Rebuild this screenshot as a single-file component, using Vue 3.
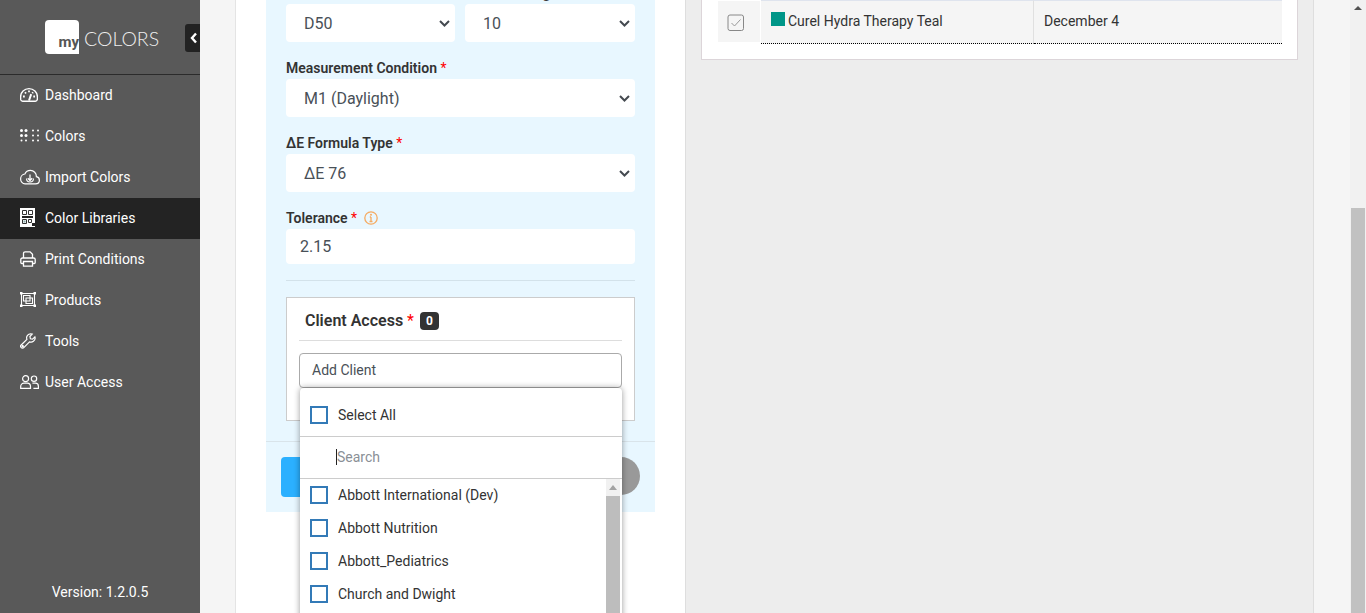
<template>
  <div class="shell">
    <aside class="sidebar">
      <div class="brand">
        <div class="logo-box"><span class="logo-my">my</span></div>
        <span class="logo-word">COLORS</span>
        <button class="collapse">
          <svg width="8" height="12" viewBox="0 0 8 12"><path d="M6 1.500 2 6l4 4.500" fill="none" stroke="#fff" stroke-width="2.400"/></svg>
        </button>
      </div>
      <nav class="nav">
        <a v-for="item in navItems" :key="item.label" class="nav-item" :class="{ active: item.active }">
          <span class="nav-icon">
            <svg v-if="item.icon === 'dashboard'" width="18" height="16" viewBox="0 0 18 16" fill="none" stroke="#fff" stroke-width="1.400">
              <path d="M2.600 14.200h12.800c1 0 1.600-.5 1.800-1.300.3-1 .2-2 .2-2.900C17.400 5.400 13.700 1.600 9 1.600S.6 5.400.6 10c0 .9 0 1.900.2 2.900.2.800.8 1.300 1.800 1.300z"/>
              <path d="M9 13.500 11.200 7.200" stroke-width="2"/>
              <path d="M9 3.500v1.800M5 5.200l1 1.400M13 5.200l-.7 1M3 9.500h1.800M13.300 9.500H15" stroke-width="1.800"/>
            </svg>
            <svg v-else-if="item.icon === 'colors'" width="20" height="13" viewBox="0 0 20 13" fill="#fff">
              <circle v-for="d in colorDots" :key="d.x + '-' + d.y" :cx="d.x" :cy="d.y" :r="d.r" />
            </svg>
            <svg v-else-if="item.icon === 'import'" width="20" height="16" viewBox="0 0 20 16" fill="none" stroke="#fff" stroke-width="1.200">
              <path d="M5 14.800h10.500c2.200 0 3.900-1.600 3.900-3.600 0-1.800-1.300-3.200-3-3.500.1-3.500-2.600-6.300-6-6.300-2.500 0-4.600 1.400-5.500 3.600C2.600 5.200.6 7.300.6 9.900c0 2.700 2 4.900 4.400 4.900z"/>
              <path d="M6.500 9.500a3.500 3.500 0 0 0 7 0" stroke-width="1.100"/>
              <path d="M10 5.500v6M7.800 9.200l2.200 2.300 2.200-2.300" stroke-width="1.300"/>
            </svg>
            <svg v-else-if="item.icon === 'libraries'" width="15" height="19" viewBox="0 0 15 19">
              <rect width="15" height="19" fill="#fff"/>
              <path d="M2.500 2.500h4v4h-4zM8.500 2.500h4v4h-4zM2.500 11.500h4v4h-4zM8.500 11.500h3v3h-3z" fill="none" stroke="#333" stroke-width="1"/>
              <rect x="2" y="8" width="11" height="2" fill="#222"/>
              <rect x="3.500" y="12.500" width="2" height="2" fill="#8aa"/>
              <rect x="12" y="15" width="3" height="3" fill="#222"/>
            </svg>
            <svg v-else-if="item.icon === 'print'" width="16" height="16" viewBox="0 0 16 16" fill="none" stroke="#fff" stroke-width="1.300">
              <path d="M3.500 7V2.400c0-.9.700-1.600 1.600-1.600h5l2.400 2.400V7"/>
              <path d="M3.500 12.500H1.800c-.6 0-1-.4-1-1V8.600c0-.9.700-1.600 1.600-1.600h11.200c.9 0 1.600.7 1.600 1.600v2.900c0 .6-.4 1-1 1h-1.700"/>
              <path d="M3.500 10.500h9v4.700h-9z"/>
            </svg>
            <svg v-else-if="item.icon === 'products'" width="16" height="15" viewBox="0 0 16 15" fill="none" stroke="#fff" stroke-width="1.100">
              <path d="M1.500 1.500h13v12h-13z"/>
              <path d="M3.500 3.500h6.500v5.500H3.500zM6 6h6.500v5.500H6z"/>
              <g fill="#fff" stroke="none">
                <rect x="0" y="0" width="2.500" height="2.500"/><rect x="13.500" y="0" width="2.500" height="2.500"/>
                <rect x="0" y="12.500" width="2.500" height="2.500"/><rect x="13.500" y="12.500" width="2.500" height="2.500"/>
              </g>
            </svg>
            <svg v-else-if="item.icon === 'tools'" width="16" height="16" viewBox="0 0 16 16" fill="none" stroke="#fff" stroke-width="1.200">
              <path d="M14.900 3.900 12.600 6.200l-2.200-.4-.5-2.300L12.200 1.100c-1.700-.6-3.600-.1-4.700 1.300-.9 1.100-1.100 2.600-.6 3.900L1.200 12c-.7.700-.7 1.900 0 2.600s1.900.7 2.600 0l5.700-5.700c1.300.5 2.800.3 3.900-.6 1.400-1.100 2-3 1.500-4.400z"/>
              <circle cx="2.700" cy="13.200" r=".6" fill="#fff"/>
            </svg>
            <svg v-else width="19" height="14" viewBox="0 0 19 14" fill="none" stroke="#fff" stroke-width="1.200">
              <circle cx="5.600" cy="3.700" r="3"/>
              <circle cx="14" cy="3.700" r="2.700"/>
              <path d="M.7 13.300v-1.700c0-2 1.500-3.400 3.300-3.400h3.200c1.800 0 3.300 1.400 3.300 3.400v1.700z"/>
              <path d="M12.400 8.200h3c1.700 0 3 1.300 3 3v2.100h-5"/>
            </svg>
          </span>
          <span>{{ item.label }}</span>
        </a>
      </nav>
      <div class="version">Version: 1.2.0.5</div>
    </aside>

    <div class="gutter"></div>

    <section class="form-panel">
      <div class="form-box">
        <div class="form-body">
          <div class="row-two">
            <div class="field">
              <label class="field-label">Illuminant <em>*</em></label>
              <div class="select">D50<svg class="chev" width="11" height="7" viewBox="0 0 11 7"><path d="M1 1l4.500 4.500L10 1" fill="none" stroke="#454a50" stroke-width="2"/></svg></div>
            </div>
            <div class="field">
              <label class="field-label">Observer Angle <em>*</em></label>
              <div class="select">10<svg class="chev" width="11" height="7" viewBox="0 0 11 7"><path d="M1 1l4.500 4.500L10 1" fill="none" stroke="#454a50" stroke-width="2"/></svg></div>
            </div>
          </div>
          <div class="field">
            <label class="field-label">Measurement Condition <em>*</em></label>
            <div class="select">M1 (Daylight)<svg class="chev" width="11" height="7" viewBox="0 0 11 7"><path d="M1 1l4.500 4.500L10 1" fill="none" stroke="#454a50" stroke-width="2"/></svg></div>
          </div>
          <div class="field">
            <label class="field-label">ΔE Formula Type <em>*</em></label>
            <div class="select">ΔE 76<svg class="chev" width="11" height="7" viewBox="0 0 11 7"><path d="M1 1l4.500 4.500L10 1" fill="none" stroke="#454a50" stroke-width="2"/></svg></div>
          </div>
          <div class="field">
            <label class="field-label">Tolerance <em>*</em>
              <svg class="info" width="14" height="14" viewBox="0 0 14 14" fill="none" stroke="#f5ab62" stroke-width="1.300">
                <circle cx="7" cy="7" r="6.200"/>
                <path d="M7 6v4.500M5.500 10.500h3M5.800 6H7" />
                <circle cx="7" cy="3.800" r="1" fill="#f5ab62" stroke="none"/>
              </svg>
            </label>
            <div class="input">2.15</div>
          </div>
          <div class="rule"></div>
          <div class="client-box">
            <div class="client-head">
              <span class="client-title">Client Access <em>*</em></span>
              <span class="badge">0</span>
            </div>
            <div class="add-client">Add Client</div>
            <div class="dropdown">
              <div class="select-all">
                <span class="check"></span>
                <span>Select All</span>
              </div>
              <div class="search"><span class="caret"></span><span class="placeholder">Search</span></div>
              <div class="client-list">
                <div class="client-items">
                  <div v-for="c in clients" :key="c" class="client-item">
                    <span class="check"></span>
                    <span>{{ c }}</span>
                  </div>
                </div>
                <div class="list-scroll">
                  <span class="list-arrow"></span>
                  <span class="list-thumb"></span>
                </div>
              </div>
            </div>
          </div>
        </div>
        <div class="form-foot">
          <button class="btn-save"></button>
          <button class="btn-cancel"></button>
        </div>
      </div>
    </section>

    <section class="right-panel">
      <div class="card">
        <div class="table-row">
          <div class="cell-check">
            <svg width="18" height="18" viewBox="0 0 18 18" fill="none">
              <rect x="1" y="1" width="15.500" height="15.500" rx="2" stroke="#888"/>
              <path d="M4.500 9l3 3 6-6.500" stroke="#999"/>
            </svg>
          </div>
          <div class="cell-name"><span class="swatch"></span><span>Curel Hydra Therapy Teal</span></div>
          <div class="cell-date">December 4</div>
        </div>
      </div>
    </section>

    <div class="right-gutter"></div>

    <div class="page-scroll">
      <span class="page-arrow"></span>
      <span class="page-thumb"></span>
    </div>
  </div>
</template>

<script setup>
const navItems = [
  { label: 'Dashboard', icon: 'dashboard' },
  { label: 'Colors', icon: 'colors' },
  { label: 'Import Colors', icon: 'import' },
  { label: 'Color Libraries', icon: 'libraries', active: true },
  { label: 'Print Conditions', icon: 'print' },
  { label: 'Products', icon: 'products' },
  { label: 'Tools', icon: 'tools' },
  { label: 'User Access', icon: 'users' }
]

const clients = ['Abbott International (Dev)', 'Abbott Nutrition', 'Abbott_Pediatrics', 'Church and Dwight']

const colorDots = []
for (const y of [1.5, 6.5, 11.5]) {
  for (const x of [1.5, 6, 13, 18]) {
    colorDots.push({ x, y, r: x < 7 && y < 8 ? 1.5 : 1 })
  }
}
</script>

<style>
html, body { margin: 0; height: 100%; overflow: hidden; }
</style>

<style scoped>
.shell {
  display: flex;
  height: 613px;
  overflow: hidden;
  font-family: Roboto, "Liberation Sans", sans-serif;
  font-size: 14px;
  background: #f5f5f5;
  color: #333;
}

.sidebar {
  width: 200px;
  flex: none;
  display: flex;
  flex-direction: column;
  background: #595959;
  color: #fff;
}
.brand {
  position: relative;
  height: 75px;
  box-sizing: border-box;
  padding: 20px 0 0 45px;
  display: flex;
  align-items: flex-start;
  border-bottom: 1px solid #2b2b2b;
  flex: none;
}
.logo-box {
  width: 34px;
  height: 34px;
  background: #fff;
  border-radius: 4px 4px 0 4px;
  display: flex;
  justify-content: flex-end;
  align-items: flex-end;
}
.logo-my {
  font-weight: 700;
  font-size: 15px;
  line-height: 14px;
  color: #555;
  padding-bottom: 5px;
}
.logo-word {
  font-family: Lato, "Liberation Sans", sans-serif;
  font-weight: 300;
  font-size: 19.500px;
  line-height: 37px;
  color: #eee;
  margin-left: 5px;
}
.collapse {
  position: absolute;
  right: 0;
  top: 24px;
  width: 15px;
  height: 28px;
  padding: 0 0 0 2px;
  border: 0;
  border-radius: 3px 0 0 3px;
  background: #222;
  display: flex;
  align-items: center;
  justify-content: center;
}
.nav { display: flex; flex-direction: column; }
.nav-item {
  height: 41px;
  box-sizing: border-box;
  display: flex;
  align-items: center;
  padding: 0 0 2px 20px;
  color: #fff;
}
.nav-item.active { background: #232323; }
.nav-icon {
  width: 25px;
  flex: none;
  display: flex;
  align-items: center;
}
.version {
  margin-top: auto;
  height: 42px;
  text-align: center;
  line-height: 42px;
}

.gutter { width: 35px; flex: none; }

.form-panel {
  width: 419px;
  flex: none;
  background: #fff;
  border-left: 1px solid #e4e4e4;
  border-right: 1px solid #dedede;
  padding-left: 30px;
}
.form-box {
  width: 389px;
  margin-top: -17px;
  background: #e8f7ff;
}
.form-body { padding: 0 20px 20px; }
.row-two { display: flex; gap: 10px; }
.row-two .field { flex: 1; }
.row-two .field:first-child { flex: 0 0 169px; }
.field { margin-bottom: 16px; }
.field-label {
  display: block;
  height: 21px;
  line-height: 21px;
  font-weight: 600;
  white-space: nowrap;
}
.field-label em, .client-title em { color: #f00; font-style: normal; font-weight: 400; }
.info { margin-left: 7px; vertical-align: -2px; }
.select {
  position: relative;
  height: 38px;
  padding-left: 18px;
  line-height: 40px;
  background: #fff;
  border-radius: 4px;
  font-size: 16px;
  color: #495057;
}
.chev { position: absolute; right: 5px; top: 16px; }
.input {
  height: 35px;
  padding-left: 14px;
  line-height: 35px;
  background: #fff;
  border-radius: 4px;
  font-size: 16px;
  color: #495057;
}
.rule { height: 1px; background: #d3e2ea; margin-bottom: 16px; }
.client-box {
  position: relative;
  height: 124px;
  box-sizing: border-box;
  border: 1px solid #ccc;
  background: #fff;
  padding: 0 12px;
}
.client-head {
  height: 43px;
  box-sizing: border-box;
  display: flex;
  align-items: center;
  padding: 3px 0 0 6px;
  gap: 6px;
  border-bottom: 1px solid #ddd;
}
.client-title { font-size: 16px; font-weight: 600; color: #333; }
.badge {
  width: 19px;
  height: 18px;
  margin-top: 1px;
  border-radius: 4px;
  background: #333;
  color: #fff;
  font-size: 12px;
  font-weight: 700;
  line-height: 18px;
  text-align: center;
}
.add-client {
  margin-top: 12px;
  height: 35px;
  box-sizing: border-box;
  padding-left: 12px;
  line-height: 33px;
  border: 1px solid #aaa;
  border-radius: 4px;
  color: #495057;
}
.dropdown {
  position: absolute;
  left: 13px;
  top: 90px;
  width: 322px;
  height: 300px;
  background: #fff;
  border-radius: 4px 4px 0 0;
  box-shadow: 0 0 6px rgba(0, 0, 0, 0.4);
  color: #333;
}
.select-all {
  height: 49px;
  box-sizing: border-box;
  display: flex;
  align-items: center;
  padding: 6px 0 0 10px;
  gap: 10px;
  border-bottom: 1px solid #ccc;
}
.check {
  width: 18px;
  height: 18px;
  box-sizing: border-box;
  border: 2px solid #337ab7;
  flex: none;
}
.search {
  height: 42px;
  box-sizing: border-box;
  display: flex;
  align-items: center;
  padding: 0 0 2px 36px;
  border-bottom: 1px solid #ccc;
}
.caret { width: 1px; height: 16px; background: #222; }
.placeholder { color: #8a8f96; }
.client-list { display: flex; height: 209px; }
.client-items { flex: 1; margin-top: -1px; }
.client-item {
  height: 33px;
  display: flex;
  align-items: center;
  gap: 10px;
  padding-left: 10px;
}
.list-scroll {
  width: 14px;
  margin-right: 2px;
  display: flex;
  flex-direction: column;
  align-items: center;
  background: #f1f1f1;
}
.list-arrow {
  margin: 6px 0 6px;
  border: 4px solid transparent;
  border-top: 0;
  border-bottom: 5px solid #a3a3a3;
}
.list-thumb { width: 14px; flex: 1; background: #bdbdbd; }

.form-foot {
  display: flex;
  justify-content: space-between;
  padding: 15px;
  border-top: 1px solid #d9e4ea;
}
.btn-save {
  width: 150px;
  height: 40px;
  border: 0;
  border-radius: 4px;
  background: #2bb0ff;
}
.btn-cancel {
  width: 120px;
  height: 38px;
  border: 0;
  border-radius: 19px;
  background: #999;
}

.right-panel {
  flex: 1;
  background: #ededed;
  padding: 0 15px;
}
.card {
  width: 579px;
  height: 59px;
  padding-left: 16px;
  border: 1px solid #dcd5d9;
  border-top: 0;
  background: #fff;
}
.table-row {
  display: flex;
  height: 44px;
  width: 564px;
}
.cell-check {
  width: 42px;
  height: 41px;
  box-sizing: border-box;
  padding: 2px 6px 0 0;
  margin-top: 1px;
  margin-right: 1px;
  flex: none;
  background: #f5f5f5;
  display: flex;
  align-items: center;
  justify-content: center;
}
.cell-name, .cell-date {
  height: 42px;
  background: #f5f5f5;
  border-top: 1px solid #dfe4ee;
  border-bottom: 1px dotted #000;
  display: flex;
  color: #333;
  line-height: 41px;
}
.cell-name {
  width: 262px;
  padding-left: 10px;
  border-right: 1px solid #e0e0e0;
}
.cell-date { flex: 1; padding-left: 10px; }
.swatch {
  width: 14px;
  height: 14px;
  margin: 11px 3px 0 0;
  background: #009688;
  flex: none;
}

.right-gutter {
  width: 36px;
  flex: none;
  border-left: 1px solid #dedede;
}
.page-scroll {
  width: 16px;
  flex: none;
  display: flex;
  flex-direction: column;
  align-items: center;
  background: #f1f1f1;
}
.page-arrow {
  margin-top: 6px;
  border: 4px solid transparent;
  border-top: 0;
  border-bottom: 4px solid #505050;
}
.page-thumb {
  width: 14px;
  margin-top: 198px;
  flex: 1;
  background: #c1c1c1;
}
</style>
